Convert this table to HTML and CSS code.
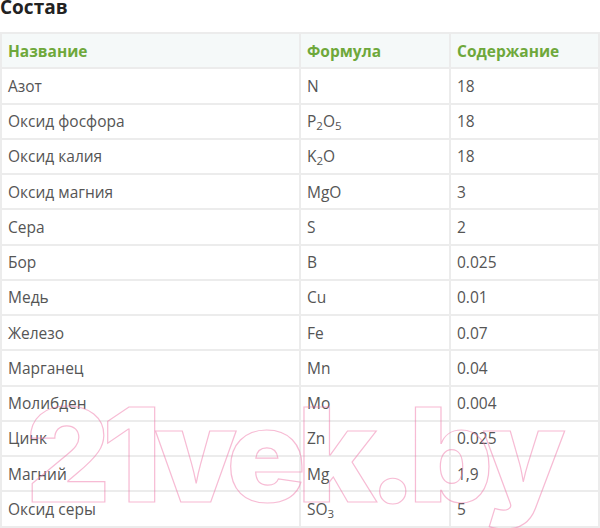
FILE: index.html
```html
<!DOCTYPE html>
<html lang="ru">
<head>
<meta charset="utf-8">
<link rel="stylesheet" href="styles.css">
</head>
<body>
<div class="page">
  <h2 class="title">Состав</h2>
  <table class="comp">
    <colgroup><col class="c1"><col class="c2"><col class="c3"></colgroup>
    <thead>
      <tr><th>Название</th><th>Формула</th><th>Содержание</th></tr>
    </thead>
    <tbody>
      <tr><td>Азот</td><td>N</td><td>18</td></tr>
      <tr><td>Оксид фосфора</td><td>P<sub>2</sub>O<sub>5</sub></td><td>18</td></tr>
      <tr><td>Оксид калия</td><td>K<sub>2</sub>O</td><td>18</td></tr>
      <tr><td>Оксид магния</td><td>MgO</td><td>3</td></tr>
      <tr><td>Сера</td><td>S</td><td>2</td></tr>
      <tr><td>Бор</td><td>B</td><td>0.025</td></tr>
      <tr><td>Медь</td><td>Cu</td><td>0.01</td></tr>
      <tr><td>Железо</td><td>Fe</td><td>0.07</td></tr>
      <tr><td>Марганец</td><td>Mn</td><td>0.04</td></tr>
      <tr><td>Молибден</td><td>Mo</td><td>0.004</td></tr>
      <tr><td>Цинк</td><td>Zn</td><td>0.025</td></tr>
      <tr><td>Магний</td><td>Mg</td><td>1,9</td></tr>
      <tr><td>Оксид серы</td><td>SO<sub>3</sub></td><td>5</td></tr>
    </tbody>
  </table>
  <div class="watermark" aria-hidden="true">21vek.by</div>
</div>
</body>
</html>
```
FILE: styles.css
```css
html, body {
  margin: 0;
  padding: 0;
  background: #fff;
}
.page {
  position: relative;
  width: 600px;
  height: 528px;
  overflow: hidden;
  font-family: "Open Sans", "Liberation Sans", sans-serif;
}
.title {
  margin: -5px 0 0 0;
  font-size: 19px;
  line-height: 24px;
  font-weight: 700;
  color: #222;
  height: 37px;
}
.comp {
  border-collapse: collapse;
  width: 598px;
  table-layout: fixed;
}
.c1 { width: 299px; }
.c2 { width: 150px; }
.c3 { width: 149px; }
.comp th, .comp td {
  border: 2px solid #ececec;
  padding: 0 5px 0 6px;
  height: 33.25px;
  text-align: left;
  vertical-align: middle;
  font-size: 15.5px;
  line-height: 20px;
}
.comp th {
  background: #f5f9f9;
  color: #6ea83b;
  font-weight: 700;
}
.comp td {
  color: #555;
  font-weight: 400;
}
.comp sub {
  font-size: 11.5px;
  line-height: 0;
  vertical-align: -3px;
}
.watermark {
  position: absolute;
  left: 26px;
  top: 390px;
  font-family: Inter, "Open Sans", sans-serif;
  font-size: 130px;
  font-weight: 900;
  line-height: 1;
  letter-spacing: -8px;
  color: transparent;
  -webkit-text-stroke: 1.2px rgba(240, 120, 170, 0.5);
  pointer-events: none;
  white-space: nowrap;
}
```
